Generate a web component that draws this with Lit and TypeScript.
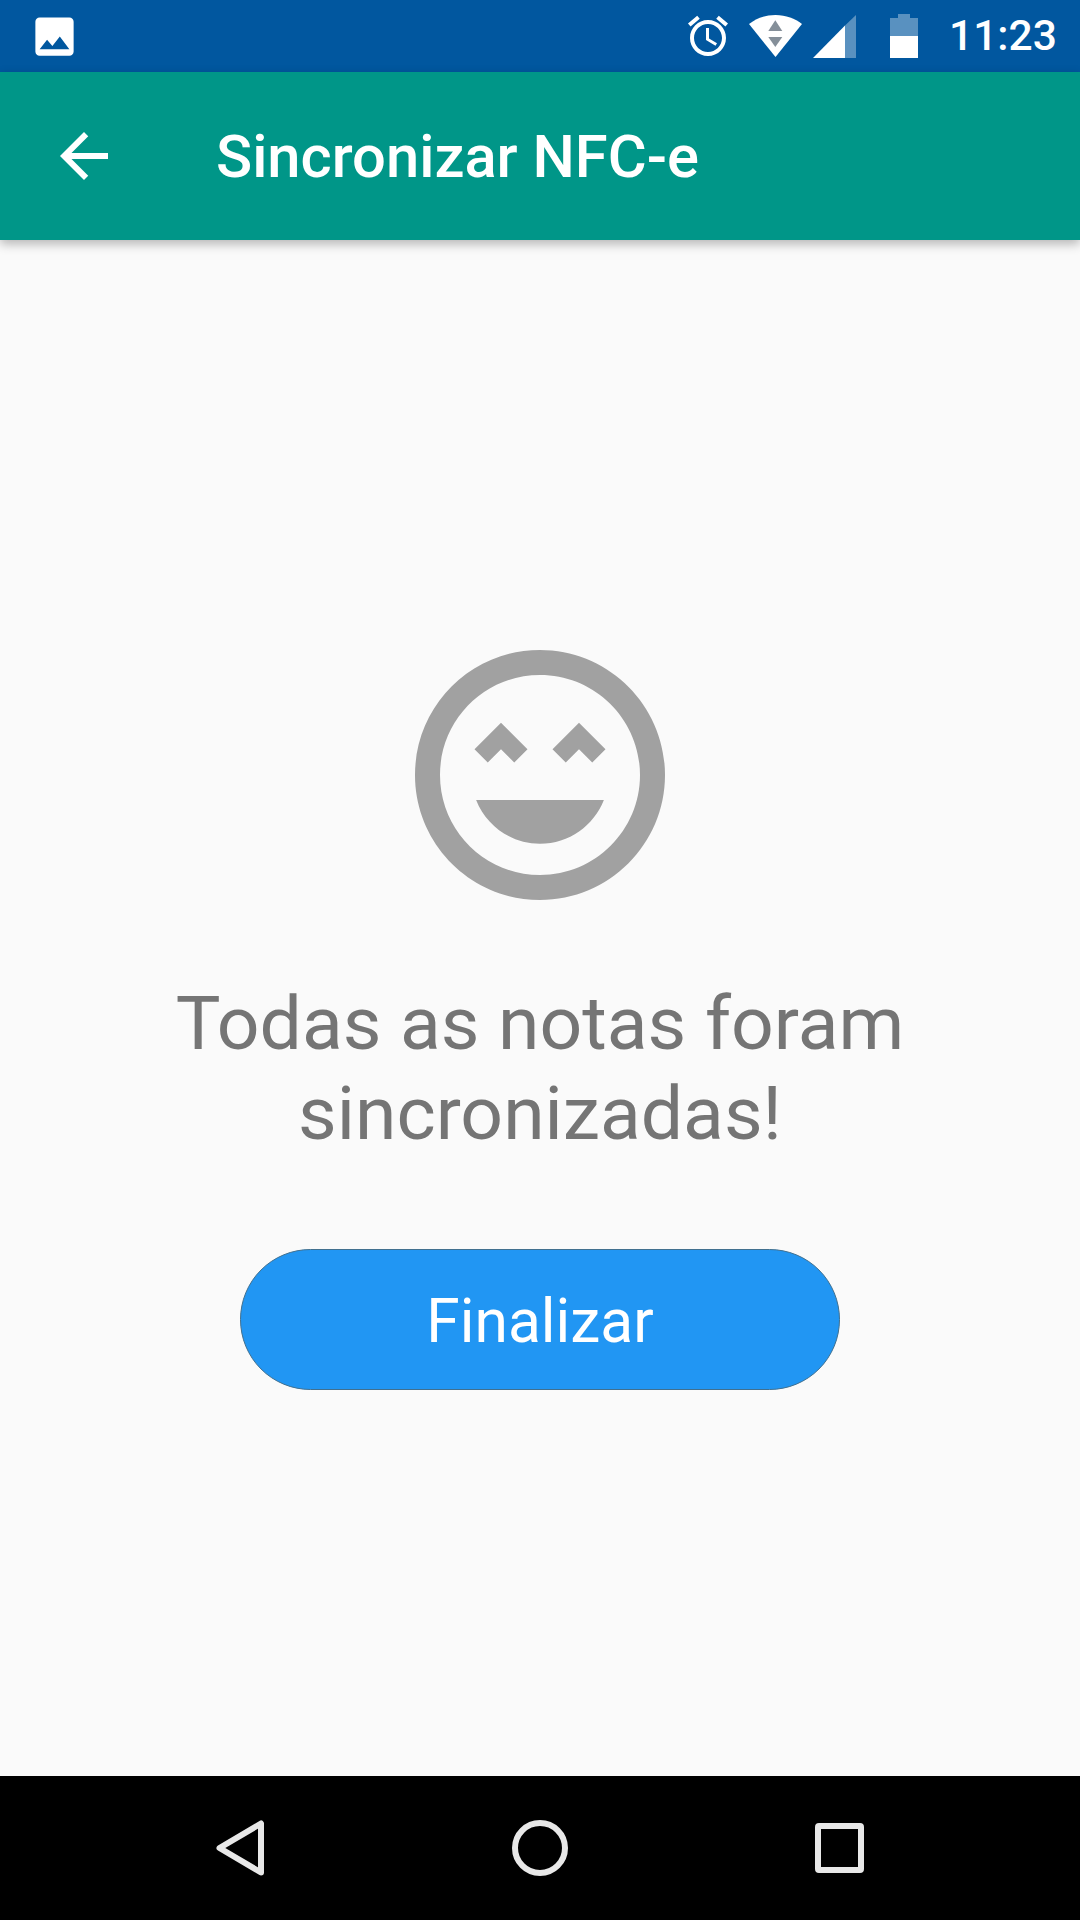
import { LitElement, html, css } from "lit";
import { customElement } from "lit/decorators.js";

@customElement("app-root")
export class AppRoot extends LitElement {
  static styles = css`
    :host {
      display: block;
      width: 1080px;
      height: 1920px;
      font-family: Roboto, "Liberation Sans", sans-serif;
      background: #fafafa;
    }
    .page { display: flex; flex-direction: column; height: 1920px; width: 1080px; overflow: hidden; }
    .status {
      height: 72px; flex: none; background: #01579f; display: flex; align-items: center;
      padding-left: 29px; color: #fff; box-sizing: border-box;
    }
    .status svg { display: block; flex: none; fill: #fff; }
    .img-icon { width: 51px; height: 51px; margin-right: auto; }
    .alarm { width: 48px; height: 48px; margin-right: 17px; }
    .wifi { width: 53px; height: 42px; margin-right: 11px; }
    .signal { width: 43px; height: 43px; margin-right: 34px; }
    .battery { width: 28px; height: 44px; margin-right: 31px; }
    .time { font-size: 42.5px; font-weight: 500; width: 111px; margin-right: 20px; line-height: 72px; white-space: nowrap; }
    .dim { opacity: 0.35; }
    .toolbar {
      height: 168px; flex: none; background: #009688; display: flex; align-items: center;
      padding-left: 48px; box-shadow: 0 4px 10px rgba(0,0,0,.28); position: relative; z-index: 1;
    }
    .toolbar svg { width: 72px; height: 72px; fill: #fff; flex: none; }
    .title { color: #fff; font-size: 59.7px; font-weight: 500; margin-left: 96px; margin-top: 2px; white-space: nowrap; }
    .content {
      flex: 1; display: flex; flex-direction: column; align-items: center; padding-top: 385px;
      background: #fafafa; box-sizing: border-box;
    }
    .face { width: 300px; height: 300px; fill: #a1a1a1; display: block; }
    .msg {
      color: #757575; font-size: 75px; line-height: 90px; text-align: center; margin-top: 53px;
      width: 800px;
    }
    .btn {
      appearance: none; margin-top: 91px; width: 600px; height: 141px; border-radius: 71px; background: #2196f3;
      border: 1px solid #41708f; box-sizing: border-box; color: #fff; font-family: inherit; font-size: 60.5px;
      display: flex; align-items: center; justify-content: center; padding: 4px 0 0;
    }
    .nav {
      height: 144px; flex: none; background: #000; display: flex; align-items: center; padding-left: 216px;
    }
    .nav svg { display: block; fill: none; stroke: #e8e8e8; stroke-width: 6; stroke-linejoin: round; flex: none; }
    .n-back { width: 48px; height: 56px; margin-right: 248px; }
    .n-home { width: 56px; height: 56px; margin-right: 247px; }
    .n-rec { width: 49px; height: 50px; }
  `;

  render() {
    return html`
      <div class="page">
        <div class="status">
          <svg class="img-icon" viewBox="0 0 24 24"><path d="M21 19V5c0-1.1-.9-2-2-2H5c-1.1 0-2 .9-2 2v14c0 1.1.9 2 2 2h14c1.1 0 2-.9 2-2zM8.5 13.5l2.5 3.01L14.5 12l4.5 6H5l3.5-4.5z"/></svg>
          <svg class="alarm" viewBox="0 0 24 24"><path d="M22 5.72l-4.6-3.86-1.29 1.53 4.6 3.86L22 5.72zM7.88 3.39L6.6 1.86 2 5.71l1.29 1.53 4.59-3.85zM12.5 8H11v6l4.75 2.85.75-1.23-4-2.37V8zM12 4c-4.97 0-9 4.03-9 9s4.02 9 9 9c4.97 0 9-4.03 9-9s-4.03-9-9-9zm0 16c-3.87 0-7-3.13-7-7s3.13-7 7-7 7 3.13 7 7-3.13 7-7 7z"/></svg>
          <svg class="wifi" viewBox="0 0 53 42">
            <path d="M0 9C7 3.5 16 0 26.5 0S46 3.500 53 9L26.500 42z"/>
            <path d="M26.300 5.300L33.300 16H19.300z" style="fill:#858f99"/>
            <path d="M19.300 22H33.300L26.300 32z" style="fill:#858f99"/>
          </svg>
          <svg class="signal" viewBox="0 0 43 43">
            <path class="dim" d="M32 10.600L43 0V43H32z"/>
            <path d="M0 43L32 10.600V43z"/>
          </svg>
          <svg class="battery" viewBox="0 0 28 44">
            <path class="dim" d="M0 4H8V0H20V4H28V22H0z"/>
            <path d="M0 22H28V44H0z"/>
          </svg>
          <div class="time">11:23</div>
        </div>
        <div class="toolbar">
          <svg viewBox="0 0 24 24"><path d="M20 11H7.830l5.590-5.590L12 4l-8 8 8 8 1.410-1.410L7.830 13H20v-2z"/></svg>
          <div class="title">Sincronizar NFC-e</div>
        </div>
        <div class="content">
          <svg class="face" viewBox="0 0 24 24"><path d="M11.990 2C6.470 2 2 6.480 2 12s4.470 10 9.990 10C17.520 22 22 17.520 22 12S17.520 2 11.990 2zM12 20c-4.420 0-8-3.580-8-8s3.580-8 8-8 8 3.580 8 8-3.580 8-8 8zm1-10.060L14.060 11l1.060-1.060L16.180 11l1.060-1.060-2.120-2.120zm-4.120 0L9.940 11 11 9.940 8.880 7.820 6.760 9.940 7.820 11zM12 17.500c2.330 0 4.310-1.460 5.110-3.500H6.890c.8 2.040 2.780 3.500 5.110 3.500z"/></svg>
          <div class="msg">Todas as notas foram<br />sincronizadas!</div>
          <button class="btn">Finalizar</button>
        </div>
        <div class="nav">
          <svg class="n-back" viewBox="0 0 48 56"><path d="M45 3.500V52.500L3.500 28z"/></svg>
          <svg class="n-home" viewBox="0 0 56 56"><circle cx="28" cy="28" r="25"/></svg>
          <svg class="n-rec" viewBox="0 0 49 50"><rect x="3" y="3" width="43" height="44" rx="1"/></svg>
        </div>
      </div>
    `;
  }
}
